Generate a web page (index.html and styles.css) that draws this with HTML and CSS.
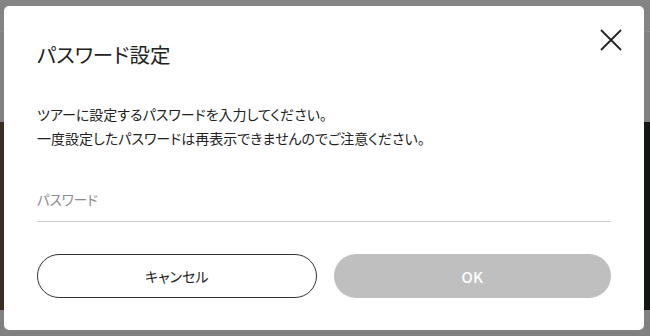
FILE: index.html
```html
<!DOCTYPE html>
<html lang="ja">
  <head>
    <meta name="viewport" content="width=device-width, initial-scale=1" />
    <title>パスワード設定</title>
    <link rel="stylesheet" href="styles.css">
  </head>

  <body>
    <!-- Dimmed page behind the dialog -->
    <div class="backdrop">
      <div class="backdrop-bar"></div>
      <div class="backdrop-gap"></div>
      <div class="backdrop-hero"></div>
    </div>

    <div class="modal" role="dialog">
      <div class="modal-head">
        <h2 class="modal-title">パスワード設定</h2>
        <button class="modal-close" aria-label="閉じる">
          <svg width="22" height="22" viewBox="0 0 22 22">
            <path d="M1 1 L21 21 M21 1 L1 21" stroke="#222" stroke-width="1.8" fill="none" />
          </svg>
        </button>
      </div>
      <p class="modal-text">
        ツアーに設定するパスワードを入力してください。<br />一度設定したパスワードは再表示できませんのでご注意ください。
      </p>
      <input class="password-field" type="password" placeholder="パスワード" />
      <div class="modal-buttons">
        <button class="btn btn-cancel">キャンセル</button>
        <button class="btn btn-ok" disabled="true">OK</button>
      </div>
    </div>
  </body>
</html>
```

FILE: styles.css
```css
* {
  box-sizing: border-box;
}

body {
  margin: 0;
  width: 650px;
  height: 336px;
  overflow: hidden;
  background-color: #808080;
  font-family: "Noto Sans CJK JP", "Noto Sans", sans-serif;
  font-feature-settings: "palt";
  color: #222;
}

.backdrop-bar {
  height: 32px;
  background-color: #848484;
  border-bottom: 1px solid #8c8c8c;
}

.backdrop-gap {
  height: 90px;
}

.backdrop-hero {
  height: 188px;
  background: linear-gradient(
    to right,
    #3b2f22 0%,
    #2a2a22 3%,
    #555 40%,
    #333 80%,
    #182033 96%,
    #141414 100%
  );
}

/* The dialog sits over the page */
.modal {
  position: absolute;
  top: 6px;
  left: 4px;
  width: 640px;
  height: 324px;
  background-color: #fff;
  border-radius: 5px;
  padding: 0 33px;
}

.modal-head {
  display: flex;
  justify-content: space-between;
  align-items: flex-start;
  height: 80px;
}

.modal-title {
  margin: 0;
  padding-top: 33px;
  font-size: 20.5px;
  font-weight: normal;
  line-height: 30px;
}

.modal-close {
  border: none;
  background: none;
  padding: 0;
  margin: 23px -11px 0 0;
  width: 22px;
  height: 22px;
  cursor: pointer;
}

.modal-text {
  margin: 16px 0 0 0;
  font-size: 14px;
  line-height: 24px;
}

.password-field {
  display: block;
  width: 100%;
  margin-top: 36px;
  height: 36px;
  border: none;
  border-bottom: 1px solid #cfcfcf;
  padding: 0 0 10px 0;
  font-family: inherit;
  font-feature-settings: inherit;
  font-size: 13.5px;
  outline: none;
}

.password-field::placeholder {
  color: #8a8a8a;
}

.modal-buttons {
  display: flex;
  gap: 17px;
  margin-top: 32px;
}

.btn {
  flex: 1;
  height: 44px;
  border-radius: 22px;
  font-family: inherit;
  font-feature-settings: inherit;
  font-size: 14px;
  cursor: pointer;
}

.btn-cancel {
  background-color: #fff;
  border: 1px solid #333;
  color: #222;
}

.btn-ok {
  background-color: #bfbfbf;
  border: none;
  color: #fff;
  font-size: 15px;
  font-weight: 500;
}
```
